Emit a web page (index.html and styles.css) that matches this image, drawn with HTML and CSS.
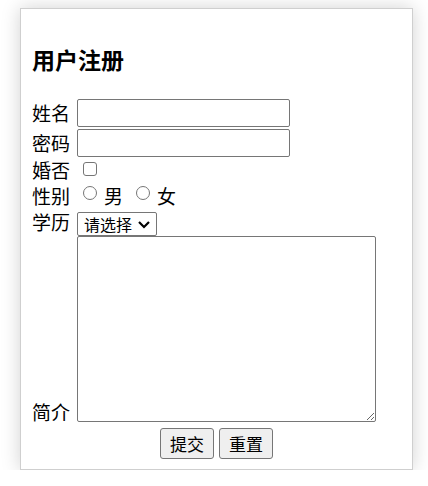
FILE: index.html
```html
<!DOCTYPE html>
<html lang="zh-CN">
<head>
<meta charset="utf-8">
<title>用户注册</title>
<link rel="stylesheet" href="styles.css">
</head>
<body>
<div class="card">
  <h3 class="title">用户注册</h3>
  <form class="form">
    <div class="row r1"><span class="label">姓名</span><input class="text" type="text"></div>
    <div class="row r2"><span class="label">密码</span><input class="text" type="password"></div>
    <div class="row r3"><span class="label">婚否</span><input class="check" type="checkbox"></div>
    <div class="row r4"><span class="label">性别</span>
      <label class="opt"><input class="radio" type="radio" name="sex"><span>男</span></label>
      <label class="opt opt2"><input class="radio" type="radio" name="sex"><span>女</span></label>
    </div>
    <div class="row r5"><span class="label">学历</span>
      <span class="select-wrap">
        <select class="select"><option>请选择</option><option>本科</option></select>
        <svg class="chev" width="14" height="9" viewBox="0 0 14 9"><path d="M2 2 L7 7 L12 2" fill="none" stroke="#000" stroke-width="2.2"/></svg>
      </span>
    </div>
    <div class="row r6"><span class="label">简介</span><textarea class="area"></textarea></div>
    <div class="actions"><button class="btn" type="submit">提交</button><button class="btn" type="reset">重置</button></div>
  </form>
</div>
</body>
</html>
```
FILE: styles.css
```css
html, body {
  margin: 0;
  padding: 0;
  background: #fff;
}
body {
  padding: 8px 0 0 20px;
  font-family: "Noto Sans CJK SC", "Noto Sans", sans-serif;
  color: #000;
}
.card {
  box-sizing: border-box;
  width: 393px;
  height: 462px;
  border: 1px solid #cfcfcf;
  background: #fff;
  box-shadow: 0 0 18px rgba(0, 0, 0, 0.18);
  padding: 0 11px;
}
.title {
  margin: 35px 0 23px 0;
  height: 31px;
  font-size: 23px;
  line-height: 31px;
  font-weight: bold;
}
.form {
  display: flex;
  flex-direction: column;
}
.row {
  display: flex;
  align-items: center;
}
.label {
  width: 45px;
  flex: none;
  font-size: 19px;
  line-height: 20px;
  white-space: nowrap;
}
.r1 { height: 30px; }
.r2 { height: 29px; }
.r3 { height: 26px; }
.r4 { height: 26px; }
.r5 { height: 27px; align-items: flex-end; }
.r5 .label { margin-bottom: 4px; }
.r6 { align-items: flex-end; }
.text {
  box-sizing: border-box;
  width: 213px;
  height: 28px;
  margin: 0;
  border: 1px solid #767676;
  border-radius: 2px;
  padding: 1px 2px;
  font-size: 16px;
}
.check {
  -webkit-appearance: none;
  appearance: none;
  box-sizing: border-box;
  flex: none;
  margin: 0 0 0 6px;
  width: 14px;
  height: 14px;
  border: 1px solid #767676;
  border-radius: 3px;
  background: #fff;
  position: relative;
  top: -1px;
}
.opt {
  display: flex;
  align-items: center;
  font-size: 19px;
  line-height: 20px;
}
.opt2 {
  margin-left: 13px;
}
.radio {
  -webkit-appearance: none;
  appearance: none;
  box-sizing: border-box;
  flex: none;
  margin: 0 7px 0 0;
  width: 14px;
  height: 14px;
  border: 1px solid #767676;
  border-radius: 50%;
  background: #fff;
  position: relative;
  top: -3px;
}
.r4 .opt:first-of-type {
  margin-left: 6px;
}
.select-wrap {
  position: relative;
  display: block;
  width: 80px;
  height: 24px;
}
.select {
  -webkit-appearance: none;
  appearance: none;
  box-sizing: border-box;
  display: block;
  width: 80px;
  height: 24px;
  margin: 0;
  padding: 0 0 0 6px;
  font-family: "Noto Sans CJK SC", sans-serif;
  font-size: 16px;
  line-height: 22px;
  color: #000;
  border: 1px solid #767676;
  border-radius: 2px;
  background: #fff;
}
.chev {
  position: absolute;
  left: 60px;
  top: 8px;
  pointer-events: none;
}
.area {
  box-sizing: border-box;
  width: 299px;
  height: 186px;
  margin: 0;
  border: 1px solid #767676;
  border-radius: 2px;
}
.actions {
  display: flex;
  justify-content: center;
  gap: 5px;
  margin-top: 6px;
}
.btn {
  box-sizing: border-box;
  width: 54px;
  height: 31px;
  margin: 0;
  padding: 0;
  font-family: "Noto Sans CJK SC", sans-serif;
  font-size: 17px;
  color: #000;
  background: #efefef;
  border: 1px solid #767676;
  border-radius: 3px;
}
```
